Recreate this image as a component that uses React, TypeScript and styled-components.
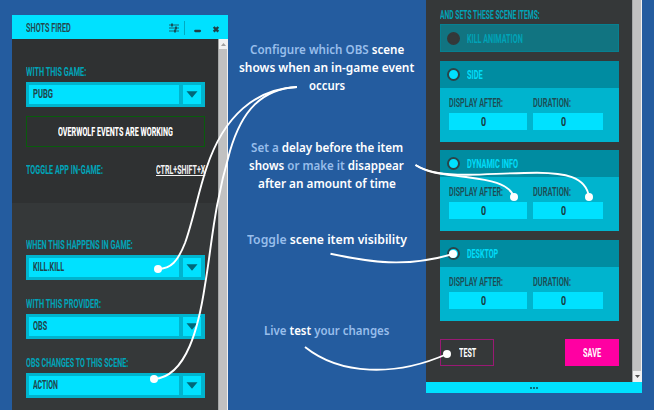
import React, { useLayoutEffect, useRef, useState } from 'react';
import styled, { createGlobalStyle } from 'styled-components';

const GlobalStyle = createGlobalStyle`
  * { box-sizing: border-box; }
  body { margin: 0; background: #245c9f; overflow: hidden; }
`;

const cyan = '#00e1ff';
const teal = '#00b4ce';
const dark = '#353839';

const Page = styled.div`
  position: relative;
  display: flex;
  width: 654px;
  height: 410px;
  padding-left: 12px;
  overflow: hidden;
  background: #245c9f;
  font-family: Roboto, 'Liberation Sans', sans-serif;
`;

const FitBox = styled.span<{ $w: number }>`
  display: block;
  flex: none;
  width: ${p => p.$w}px;
  white-space: nowrap;
`;
const FitInner = styled.span`
  display: inline-block;
  transform-origin: 0 50%;
`;

/* Condenses a line of text to the given width. */
function Fit({ w, children }: { w: number; children: React.ReactNode }) {
  const ref = useRef<HTMLSpanElement>(null);
  const [scale, setScale] = useState(1);
  useLayoutEffect(() => {
    if (ref.current) setScale(w / ref.current.offsetWidth);
  }, [w]);
  return (
    <FitBox $w={w}>
      <FitInner ref={ref} style={{ transform: `scaleX(${scale})` }}>{children}</FitInner>
    </FitBox>
  );
}

const Window = styled.section`
  display: flex;
  flex-direction: column;
  flex: none;
  width: 216px;
`;
const LeftWindow = styled(Window)`
  margin-top: 15px;
  height: 395px;
`;
const RightWindow = styled(Window)`
  height: 393px;
`;
const TitleBar = styled.header`
  display: flex;
  align-items: center;
  flex: none;
  height: 24px;
  padding: 2px 0 0 14px;
  background: ${cyan};
  color: #24474d;
  font-size: 13px;
  font-weight: 600;
  line-height: 14px;
`;
const TitleIcons = styled.svg`
  display: block;
  margin-left: auto;
`;
const WindowBody = styled.div`
  display: flex;
  flex: 1;
  min-height: 0;
`;
const Content = styled.div`
  width: 206px;
  background: ${dark};
`;
const Scrollbar = styled.div`
  display: flex;
  flex-direction: column;
  width: 10px;
  background: #c1c1c1;
  border-left: 1px solid #a6a8a8;
  border-right: 1px solid #f1f1f1;
`;
const ScrollButton = styled.div<{ $end?: boolean }>`
  display: flex;
  align-items: center;
  justify-content: center;
  height: ${p => (p.$end ? 11 : 10)}px;
  margin-top: ${p => (p.$end ? 'auto' : '0')};
  background: #f1f1f1;
`;
const GameSection = styled.div`
  height: 164px;
  padding: 25px 0 0 14px;
  background: #2f3132;
`;
const EventSection = styled.div`
  padding: 34px 0 0 14px;
`;
const Label = styled.div`
  height: 16px;
  color: #00a4b8;
  font-size: 13px;
  font-weight: 700;
  line-height: 16px;
`;
const Select = styled.div`
  display: flex;
  gap: 4px;
  width: 179px;
  height: 25px;
  margin: 2px 0 16px;
  padding: 3px 4px 3px 3px;
  background: ${teal};
`;
const SelectValue = styled.div`
  width: 150px;
  padding-left: 4px;
  background: ${cyan};
  color: #1f454b;
  font-size: 13px;
  font-weight: 700;
  line-height: 18px;
`;
const SelectButton = styled.div`
  display: flex;
  align-items: center;
  justify-content: center;
  flex: 1;
  background: ${cyan};
`;
const Status = styled.div`
  display: flex;
  align-items: center;
  justify-content: center;
  width: 179px;
  height: 31px;
  margin-top: -7px;
  border: 1px solid #095c0d;
  color: #fff;
  font-size: 13px;
  font-weight: 800;
`;
const HotkeyRow = styled.div`
  display: flex;
  justify-content: space-between;
  width: 179px;
  margin-top: 15px;
`;
const Hotkey = styled.div`
  color: #f2f2f2;
  font-size: 13px;
  font-weight: 700;
  line-height: 16px;
  text-decoration: underline;
  text-underline-offset: 1px;
  span { text-decoration: inherit; }
`;
const Notes = styled.main`
  display: flex;
  flex-direction: column;
  align-items: center;
  flex: none;
  width: 198px;
  padding-top: 41px;
  color: #fff;
  font: 600 12.3px/18px 'Noto Sans', sans-serif;
`;
const Note = styled.div<{ $gap: number; $shift?: number }>`
  display: flex;
  flex-direction: column;
  align-items: center;
  margin: 0 ${p => p.$shift ?? 0}px ${p => p.$gap}px 0;
`;
const Soft = styled.span`
  color: #98beeb;
`;
const SceneItems = styled.div`
  padding: 7px 0 0 14px;
  width: 193px;
`;
const ItemCard = styled.div`
  height: 81px;
  margin-top: 8.5px;
  background: ${teal};
`;
const ItemHead = styled.div<{ $off?: boolean }>`
  display: flex;
  align-items: center;
  gap: 7px;
  height: ${p => (p.$off ? 28 : 27)}px;
  margin-top: ${p => (p.$off ? 1 : 0)}px;
  padding-left: 7px;
  background: ${p => (p.$off ? '#117481' : '#008ca1')};
  border: solid ${p => (p.$off ? '#078091' : '#0095a9')};
  border-width: ${p => (p.$off ? '1px' : '0')};
  color: ${p => (p.$off ? '#00a3b7' : '#00dcf8')};
  font-size: 13px;
  font-weight: 700;
`;
const Toggle = styled.span<{ $off?: boolean }>`
  flex: none;
  width: 13px;
  height: 13px;
  border: 2px solid ${p => (p.$off ? '#343839' : '#29454a')};
  border-radius: 50%;
  background: ${p => (p.$off ? '#343839' : cyan)};
  margin-left: ${p => (p.$off ? -1 : 0)}px;
`;
const Fields = styled.div`
  display: grid;
  grid-template-columns: 78px 70px;
  column-gap: 6px;
  padding: 7px 0 0 9px;
`;
const FieldLabel = styled.div`
  height: 18px;
  color: #1d4c53;
  font-size: 13.3px;
  font-weight: 600;
  line-height: 16px;
`;
const FieldInput = styled.div`
  display: flex;
  justify-content: center;
  height: 17px;
  padding-right: 9px;
  background: ${cyan};
  color: #173d43;
  font-size: 12.5px;
  font-weight: 700;
  line-height: 17px;
`;
const Actions = styled.div`
  display: flex;
  justify-content: space-between;
  width: 193px;
  padding: 18px 0 0 14px;
`;
const Button = styled.div<{ $primary?: boolean }>`
  display: flex;
  align-items: center;
  justify-content: center;
  width: ${p => (p.$primary ? 54 : 54)}px;
  height: 27px;
  border: 1px solid ${p => (p.$primary ? '#ff00a2' : '#9a1974')};
  background: ${p => (p.$primary ? '#ff00a2' : 'transparent')};
  color: #fff;
  font-size: 13px;
  font-weight: 700;
`;
const ResizeBar = styled.footer`
  display: flex;
  align-items: center;
  justify-content: center;
  gap: 1px;
  flex: none;
  height: 11px;
  background: ${cyan};
`;
const Dot = styled.i`
  width: 2px;
  height: 2px;
  background: #087180;
`;
const Connectors = styled.svg`
  position: absolute;
  inset: 0;
  pointer-events: none;
`;

function Dropdown({ value, w }: { value: string; w: number }) {
  return (
    <Select>
      <SelectValue><Fit w={w}>{value}</Fit></SelectValue>
      <SelectButton>
        <svg width="12" height="7" viewBox="0 0 12 7"><path d="M.5.2h11L6 6.8z" fill="#006779" /></svg>
      </SelectButton>
    </Select>
  );
}

function SceneItem({ name, w }: { name: string; w: number }) {
  return (
    <ItemCard>
      <ItemHead><Toggle /><Fit w={w}>{name}</Fit></ItemHead>
      <Fields>
        <FieldLabel><Fit w={54}>DISPLAY AFTER:</Fit></FieldLabel>
        <FieldLabel><Fit w={38}>DURATION:</Fit></FieldLabel>
        <FieldInput><Fit w={5}>0</Fit></FieldInput>
        <FieldInput><Fit w={5}>0</Fit></FieldInput>
      </Fields>
    </ItemCard>
  );
}

export default function App() {
  return (
    <Page>
      <GlobalStyle />
      <LeftWindow>
        <TitleBar>
          <Fit w={45}>SHOTS FIRED</Fit>
          <TitleIcons width="60" height="20" viewBox="168 17.5 60 20">
            <path d="M169 24.5h10M169 27.5h10M169 30.5h10" stroke="#17656f" />
            <path d="M172 23v3M176 26v3M175 29v3" stroke="#183f46" strokeWidth="1.6" />
            <path d="M184.5 20.5v14" stroke="#00abc1" />
            <path d="M195.3 30.5h4.6" stroke="#204047" strokeWidth="2.3" strokeLinecap="round" />
            <path d="M213.7 26.5l4.6 4.6M218.3 26.5l-4.6 4.6" stroke="#204047" strokeWidth="2.4" />
          </TitleIcons>
        </TitleBar>
        <WindowBody>
          <Content>
            <GameSection>
              <Label><Fit w={60}>WITH THIS GAME:</Fit></Label>
              <Dropdown value="PUBG" w={20} />
              <Status><Fit w={115}>OVERWOLF EVENTS ARE WORKING</Fit></Status>
              <HotkeyRow>
                <Label><Fit w={77}>TOGGLE APP IN-GAME:</Fit></Label>
                <Hotkey><Fit w={49}>CTRL+SHIFT+X</Fit></Hotkey>
              </HotkeyRow>
            </GameSection>
            <EventSection>
              <Label><Fit w={107}>WHEN THIS HAPPENS IN GAME:</Fit></Label>
              <Dropdown value="KILL.KILL" w={31} />
              <Label><Fit w={75}>WITH THIS PROVIDER:</Fit></Label>
              <Dropdown value="OBS" w={14} />
              <Label><Fit w={102}>OBS CHANGES TO THIS SCENE:</Fit></Label>
              <Dropdown value="ACTION" w={25} />
            </EventSection>
          </Content>
          <Scrollbar>
            <ScrollButton><svg width="5" height="3"><path d="M0 3L2.5 0 5 3z" fill="#a0a0a0" /></svg></ScrollButton>
          </Scrollbar>
        </WindowBody>
      </LeftWindow>

      <Notes>
        <Note $gap={44} $shift={1}>
          <Fit w={154}><Soft>Configure which OBS</Soft> scene</Fit>
          <Fit w={175}>shows when an in-game event</Fit>
          <Fit w={36}>occurs</Fit>
        </Note>
        <Note $gap={38} $shift={1}>
          <Fit w={152}><Soft>Set a</Soft> delay before the item</Fit>
          <Fit w={155}>shows <Soft>or make it</Soft> disappear</Fit>
          <Fit w={138}>after an amount of time</Fit>
        </Note>
        <Note $gap={73} $shift={1}><Fit w={160}><Soft>Toggle</Soft> scene item visibility</Fit></Note>
        <Note $gap={0} $shift={2}><Fit w={125}><Soft>Live</Soft> test <Soft>your changes</Soft></Fit></Note>
      </Notes>

      <RightWindow>
        <WindowBody>
          <Content>
            <SceneItems>
              <Label><Fit w={100}>AND SETS THESE SCENE ITEMS:</Fit></Label>
              <ItemHead $off><Toggle $off /><Fit w={56}>KILL ANIMATION</Fit></ItemHead>
              <SceneItem name="SIDE" w={16} />
              <SceneItem name="DYNAMIC INFO" w={51} />
              <SceneItem name="DESKTOP" w={31} />
            </SceneItems>
            <Actions>
              <Button><Fit w={17}>TEST</Fit></Button>
              <Button $primary><Fit w={18}>SAVE</Fit></Button>
            </Actions>
          </Content>
          <Scrollbar>
            <ScrollButton $end><svg width="5" height="3"><path d="M0 0h5L2.5 3z" fill="#505050" /></svg></ScrollButton>
          </Scrollbar>
        </WindowBody>
        <ResizeBar><Dot /><Dot /><Dot /></ResizeBar>
      </RightWindow>

      <Connectors width="654" height="410" viewBox="0 0 654 410">
        <g fill="none" stroke="#fff" strokeWidth="1.9">
          <path d="M297 87C256 89 224 115 206.5 168C198 193 193 221 185 243C178 261 171 269 158 269" />
          <path d="M297 87C262 89 242 110 230 151C213 210 212 245 205 285C199 325 187 377 154 379" />
          <path d="M415.5 165C429 173 445 175 468 174.8C488 174.5 513 172.8 537 172.7C564 173 586 176 589 197" />
          <path d="M415.5 165C429 174 447 174.5 466 177C489 180 509 183 514 197" />
          <path d="M330.5 253.7C370 262 405 268 453 254" />
          <path d="M305 347C340 375 395 377 447 354" />
        </g>
        <g fill="#fff">
          <circle cx="158" cy="269" r="4" />
          <circle cx="154" cy="379" r="4" />
          <circle cx="514" cy="197" r="4" />
          <circle cx="589" cy="197" r="4" />
          <circle cx="453" cy="254" r="4" />
          <circle cx="447" cy="354" r="4" />
        </g>
      </Connectors>
    </Page>
  );
}
